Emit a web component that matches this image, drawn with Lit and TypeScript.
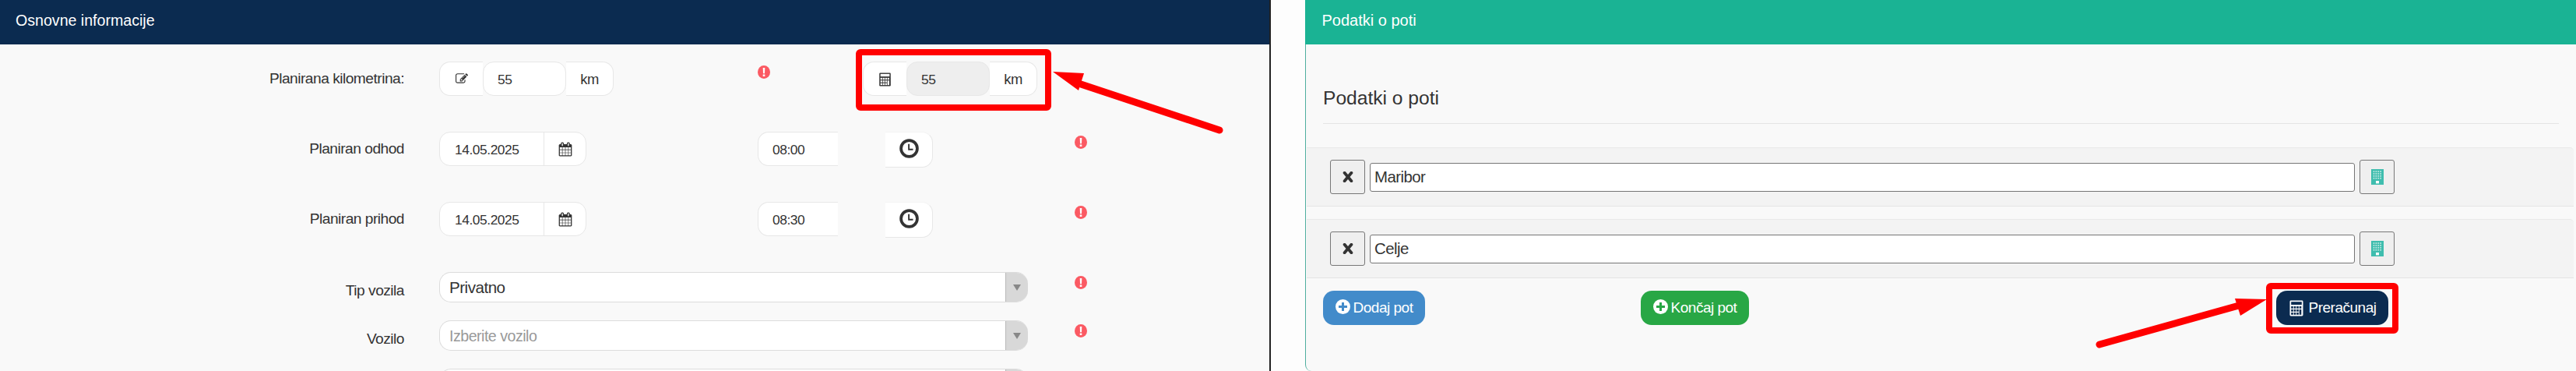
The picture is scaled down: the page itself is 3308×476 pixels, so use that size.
import { LitElement, html, css, svg } from "lit";
import { customElement } from "lit/decorators.js";

const EDIT = "M888 1184l116-116-152-152-116 116v56h96v96h56zm440-720q-16-16-33 1l-350 350q-17 17-1 33t33-1l350-350q17-17 1-33zm80 594v190q0 119-84.5 203.5t-203.5 84.5h-832q-119 0-203.5-84.5t-84.5-203.5v-832q0-119 84.5-203.5t203.5-84.5h832q63 0 117 25 15 7 18 23 3 17-9 29l-49 49q-14 14-32 8-23-6-45-6h-832q-66 0-113 47t-47 113v832q0 66 47 113t113 47h832q66 0 113-47t47-113v-126q0-13 9-22l64-64q15-15 35-7t20 29zm-96-738l288 288-672 672h-288v-288zm444 132l-92 92-288-288 92-92q28-28 68-28t68 28l152 152q28 28 28 68t-28 68z";
const CAL = "M192 1664h288v-288h-288v288zm352 0h320v-288h-320v288zm-352-352h288v-320h-288v320zm352 0h320v-320h-320v320zm-352-384h288v-288h-288v288zm736 736h320v-288h-320v288zm-384-736h320v-288h-320v288zm768 736h288v-288h-288v288zm-384-352h320v-320h-320v320zm-352-864v-288q0-13-9.5-22.5t-22.5-9.5h-64q-13 0-22.5 9.5t-9.5 22.5v288q0 13 9.5 22.5t22.5 9.5h64q13 0 22.5-9.5t9.5-22.5zm736 864h288v-320h-288v320zm-384-384h320v-288h-320v288zm384 0h288v-288h-288v288zm32-480v-288q0-13-9.5-22.5t-22.5-9.5h-64q-13 0-22.5 9.5t-9.5 22.5v288q0 13 9.5 22.5t22.5 9.5h64q13 0 22.5-9.5t9.5-22.5zm384-64v1280q0 52-38 90t-90 38h-1408q-52 0-90-38t-38-90v-1280q0-52 38-90t90-38h128v-96q0-66 47-113t113-47h64q66 0 113 47t47 113v96h384v-96q0-66 47-113t113-47h64q66 0 113 47t47 113v96h128q52 0 90 38t38 90z";

const iconEdit = html`<svg class="i-edit" viewBox="0 0 1792 1792"><path fill="#333" d=${EDIT}></path></svg>`;
const iconCal = html`<svg class="i-cal" viewBox="0 0 1792 1792"><path fill="#333" d=${CAL}></path></svg>`;
const iconClock = html`<svg class="i-clock" viewBox="0 0 24 24"><circle cx="12" cy="12" r="10" fill="none" stroke="#333" stroke-width="3.6"></circle><path d="M11.6 6.4v6.8h5.2" fill="none" stroke="#333" stroke-width="1.8"></path></svg>`;
const iconErr = html`<svg class="i-err" viewBox="0 0 16 17"><ellipse cx="8" cy="8.5" rx="8" ry="8.5" fill="#fb5a63"></ellipse><path d="M6.7 3h2.6l-.3 7.2H7z M6.7 11.4h2.6v2.6H6.7z" fill="#fff"></path></svg>`;
const iconTimes = html`<svg class="i-x" viewBox="0 0 14 14"><path d="M2.6 1.8l8.8 10.4M11.4 1.8L2.6 12.2" stroke="#333" stroke-width="3.8" stroke-linecap="round" fill="none"></path></svg>`;

function calc(fill: string, hole: string, cls: string) {
  const cells = [];
  for (let r = 0; r < 3; r++) for (let c = 0; c < 4; c++) {
    if (c === 3 && r > 0) continue;
    cells.push(svg`<rect x=${2.2 + c * 3.5} y=${8 + r * 4} width="2.6" height="2.8" fill=${hole}></rect>`);
  }
  return html`<svg class=${cls} viewBox="0 0 18 21"><rect x="0.5" y="0.5" width="17" height="20" rx="1.4" fill=${fill}></rect><rect x="2.2" y="2.2" width="13.6" height="3.8" fill=${hole}></rect>${cells}<rect x="12.7" y="12" width="2.6" height="6.8" fill=${hole}></rect></svg>`;
}

function plus(color: string) {
  return html`<svg class="i-plus" viewBox="0 0 19 19"><circle cx="9.5" cy="9.5" r="9.5" fill="#fff"></circle><path d="M8 4h3v4h4v3h-4v4H8v-4H4V8h4z" fill=${color}></path></svg>`;
}

function building() {
  const cells = [];
  for (let r = 0; r < 4; r++) for (let c = 0; c < 4; c++) {
    cells.push(svg`<rect x=${2.6 + c * 2.9} y=${2.2 + r * 2.9} width="1.7" height="1.7" fill="#bfe9e2"></rect>`);
  }
  return html`<svg class="i-bld" viewBox="0 0 16 20"><rect width="16" height="20" fill="#3fbdae"></rect>${cells}<rect x="6" y="15" width="4" height="3.4" fill="#fff"></rect></svg>`;
}

@customElement("app-root")
export class AppRoot extends LitElement {
  static styles = css`
    :host {
      display: block;
      width: 3308px;
      height: 476px;
      overflow: hidden;
      background: #fdfdfd;
      color: #333;
      font-family: "Liberation Sans", Arial, sans-serif;
    }
    .page { position: relative; display: flex; width: 3308px; height: 476px; overflow: hidden; }
    .left {
      width: 1630px;
      flex: none;
      border-right: 2px solid #222;
      background: #f9f9f9;
    }
    .head {
      display: flex;
      align-items: center;
      color: #fff;
      font-size: 19.6px;
    }
    .head.navy { background: #0b2b50; padding-left: 20px; padding-bottom: 4px; height: 53px; }
    .head.teal { background: #1ab394; padding-left: 22px; padding-bottom: 4px; height: 53px; font-size: 20px; }
    .form { padding-top: 22px; }
    .row {
      display: grid;
      grid-template-columns: 519px 454px 135px 272px 60px;
      height: 44px;
      margin-bottom: 46px;
    }
    .row.sel { height: 39px; margin-bottom: 23px; }
    .lab { font-size: 19.2px; letter-spacing: -0.52px; line-height: 44px; text-align: right; }
    .sel .lab { line-height: 47px; }
    .ctl { margin-left: 45px; }
    .err { padding-top: 5px; grid-column: 5; }
    .first-err { grid-column: 3; padding-top: 5px; }
    .group { display: flex; height: 44px; box-sizing: border-box; }
    .group.wide { width: 224px; }
    .addon {
      box-sizing: border-box;
      display: flex;
      align-items: center;
      justify-content: center;
      background: #fff;
      border: 1px solid #e7e7e7;
      height: 44px;
    }
    .addon.l { width: 56px; border-right: 0; border-radius: 14px 0 0 14px; }
    .addon.r { width: 61px; border-left: 0; border-radius: 0 14px 14px 0; font-size: 18.4px; letter-spacing: -0.5px; padding-top: 2px; }
    .field {
      box-sizing: border-box;
      width: 107px;
      height: 44px;
      padding: 2px 0 0 18px;
      margin: 0;
      border: 1px solid #e7e7e7;
      border-radius: 14px;
      background: #fff;
      color: #333;
      font: 17.4px "Liberation Sans", Arial, sans-serif;
      letter-spacing: -0.45px;
      outline: none;
    }
    .field.ro { background: #eee; }
    .date { width: 189px; display: flex; height: 44px; box-sizing: border-box; border: 1px solid #e7e7e7; border-radius: 14px; background: #fff; overflow: hidden; }
    .date input { flex: 1; min-width: 0; border: 0; padding: 2px 0 0 19px; background: transparent; color: #333; font: 17.4px "Liberation Sans", Arial, sans-serif; letter-spacing: -0.45px; outline: none; }
    .date .cal { width: 53px; flex: none; border-left: 1px solid #e7e7e7; display: flex; align-items: center; justify-content: center; }
    .time { grid-column: 3 / span 2; display: flex; align-items: flex-start; }
    .time input {
      box-sizing: border-box;
      width: 103px;
      height: 44px;
      padding: 2px 0 0 18px;
      border: 1px solid #e7e7e7;
      border-right: 0;
      border-radius: 14px 0 0 14px;
      background: #fff;
      color: #333;
      font: 17.4px "Liberation Sans", Arial, sans-serif;
      letter-spacing: -0.45px;
      outline: none;
    }
    .clockb {
      box-sizing: border-box;
      width: 61px;
      height: 46px;
      margin-left: 61px;
      background: #fff;
      border: 1px solid #e7e7e7;
      border-left: 0;
      border-top-color: #f4f4f4;
      border-radius: 0 14px 14px 0;
      display: flex;
      align-items: center;
      justify-content: center;
      padding-bottom: 4px;
    }
    .select {
      grid-column: 2 / span 3;
      margin-left: 45px;
      width: 756px;
      height: 39px;
      box-sizing: border-box;
      display: flex;
      background: #fff;
      border: 1px solid #dcdcdc;
      border-width: 1.5px 0 1.5px 1.5px;
      border-radius: 15px;
      overflow: hidden;
    }
    .select .val { flex: 1; font-size: 20.6px; letter-spacing: -0.5px; line-height: 38px; padding-left: 12px; color: #333; }
    .select .val.ph { color: #999; font-size: 19.6px; letter-spacing: -0.5px; }
    .select .arr {
      width: 28px;
      flex: none;
      background: #d8d8d8;
      margin: -2px 0;
      display: flex;
      align-items: center;
      justify-content: center;
      border-left: 1px solid #b8b8b8;
    }
    .tri { width: 0; height: 0; border-left: 5px solid transparent; border-right: 5px solid transparent; border-top: 8px solid #888; }

    .i-edit { width: 18px; height: 16px; }
    .i-cal { width: 18px; height: 19px; }
    .i-clock { width: 25px; height: 25px; }
    .i-err { width: 16px; height: 17px; display: block; }
    .i-calc { width: 17px; height: 18px; margin-top: 2px; }
    .i-calc2 { width: 20px; height: 21px; margin-right: 6px; }
    .i-plus { width: 19px; height: 19px; margin-right: 4px; margin-top: -4px; }
    .i-x { width: 14px; height: 14px; }
    .i-bld { width: 16px; height: 20px; }

    .right {
      flex: 1;
      margin-left: 44px;
      border-left: 1.5px solid #4fae9f;
      border-bottom-left-radius: 8px;
      background: #f9f9f9;
      min-width: 0;
    }
    .right .head { margin-left: -1.5px; }
    .title {
      margin: 54px 22px 30px 22px;
      height: 47px;
      line-height: 30px;
      font-size: 24.6px;
      border-bottom: 1px solid #e5e5e5;
    }
    .stop {
      box-sizing: border-box;
      height: 76px;
      margin: 0 3px 16px 1px;
      padding: 15px 230px 15px 30px;
      display: flex;
      align-items: center;
      gap: 6px;
      background: #f3f3f3;
      border-top: 1px solid #e9e9e9;
      border-bottom: 1px solid #e4e4e4;
      border-radius: 0 5px 0 0;
    }
    .sq {
      box-sizing: border-box;
      width: 45px;
      height: 44px;
      flex: none;
      padding: 0;
      background: #efefef;
      border: 1px solid #777;
      border-radius: 3px;
      display: flex;
      align-items: center;
      justify-content: center;
    }
    .stop input {
      box-sizing: border-box;
      flex: 1;
      min-width: 0;
      height: 37px;
      padding: 1px 5px 0;
      border: 1px solid #767676;
      border-radius: 3px;
      background: #fff;
      color: #333;
      outline: none;
      font: 20.4px "Liberation Sans", Arial, sans-serif;
      letter-spacing: -0.55px;
    }
    .actions {
      display: grid;
      grid-template-columns: 408px 816px auto;
      margin-left: 22px;
    }
    .btn {
      box-sizing: border-box;
      display: inline-flex;
      align-items: center;
      justify-content: center;
      height: 44px;
      border: 0;
      padding: 0;
      border-radius: 14px;
      color: #fff;
      font: 19px "Liberation Sans", Arial, sans-serif;
      letter-spacing: -0.5px;
    }
    .b1 { width: 131px; background: #428bca; }
    .b2 { width: 139px; background: #28a745; }
    .b3 { width: 144px; background: #0b2b50; }
    .marks { position: absolute; left: 0; top: 0; width: 3308px; height: 476px; pointer-events: none; }
  `;

  render() {
    return html`
      <div class="page">
        <section class="left">
          <div class="head navy">Osnovne informacije</div>
          <div class="form">
            <div class="row">
              <div class="lab">Planirana kilometrina:</div>
              <div class="ctl group">
                <span class="addon l">${iconEdit}</span>
                <input class="field" value="55" />
                <span class="addon r">km</span>
              </div>
              <div class="first-err">${iconErr}</div>
              <div class="group wide">
                <span class="addon l">${calc("#333", "#fff", "i-calc")}</span>
                <input class="field ro" readonly value="55" />
                <span class="addon r">km</span>
              </div>
            </div>
            ${this.dateRow("Planiran odhod", "08:00")}
            ${this.dateRow("Planiran prihod", "08:30")}
            ${this.selRow("Tip vozila", "Privatno", false)}
            ${this.selRow("Vozilo", "Izberite vozilo", true)}
            <div class="row sel">
              <div class="lab"></div>
              <div class="select"><div class="val"></div><div class="arr"></div></div>
            </div>
          </div>
        </section>
        <section class="right">
          <div class="head teal">Podatki o poti</div>
          <div class="title">Podatki o poti</div>
          ${["Maribor", "Celje"].map(
            (c) => html`<div class="stop">
              <button class="sq">${iconTimes}</button>
              <input value=${c} />
              <button class="sq">${building()}</button>
            </div>`
          )}
          <div class="actions">
            <div><button class="btn b1">${plus("#428bca")}Dodaj pot</button></div>
            <div><button class="btn b2">${plus("#28a745")}Končaj pot</button></div>
            <div><button class="btn b3">${calc("#fff", "#0b2b50", "i-calc2")}Preračunaj</button></div>
          </div>
        </section>
        <svg class="marks" viewBox="0 0 3308 476">
          <rect x="1103" y="67" width="243" height="71" rx="2" fill="none" stroke="#f00" stroke-width="8"></rect>
          <line x1="1566" y1="167" x2="1385" y2="107" stroke="#f00" stroke-width="9" stroke-linecap="round"></line>
          <polygon points="1352,92 1392,94 1385,116" fill="#f00"></polygon>
          <rect x="2914" y="367" width="162" height="57" rx="2" fill="none" stroke="#f00" stroke-width="8"></rect>
          <line x1="2696" y1="442" x2="2875" y2="392" stroke="#f00" stroke-width="9" stroke-linecap="round"></line>
          <polygon points="2911,384 2870,383 2877,405" fill="#f00"></polygon>
        </svg>
      </div>
    `;
  }

  dateRow(label: string, time: string) {
    return html`<div class="row">
      <div class="lab">${label}</div>
      <div class="ctl"><div class="date"><input value="14.05.2025" /><span class="cal">${iconCal}</span></div></div>
      <div class="time"><input value=${time} /><span class="clockb">${iconClock}</span></div>
      <div class="err">${iconErr}</div>
    </div>`;
  }

  selRow(label: string, val: string, ph: boolean) {
    return html`<div class="row sel">
      <div class="lab">${label}</div>
      <div class="select"><div class="val ${ph ? "ph" : ""}">${val}</div><div class="arr"><span class="tri"></span></div></div>
      <div class="err">${iconErr}</div>
    </div>`;
  }
}
